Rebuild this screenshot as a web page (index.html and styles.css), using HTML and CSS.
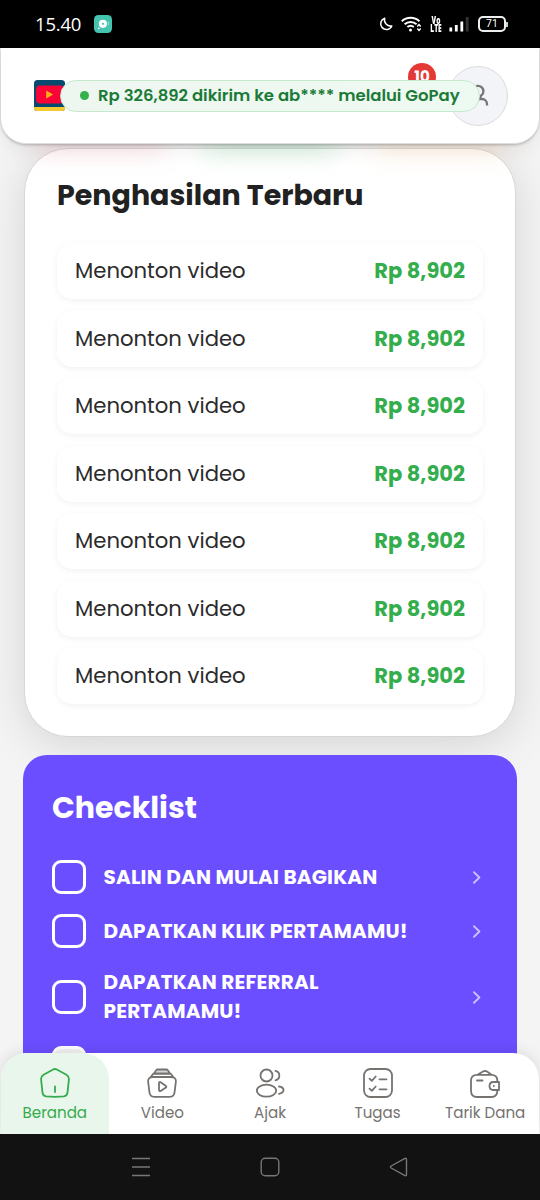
FILE: index.html
```
<!DOCTYPE html>
<html lang="id">
<head>
<meta charset="utf-8">
<title>Beranda</title>
<link rel="stylesheet" href="styles.css">
</head>
<body>
<div class="statusbar">
  <span class="clock">15.40</span>
  <svg class="app-icon" width="18" height="18" viewBox="0 0 18 18"><rect width="18" height="18" rx="4.5" fill="#45c5af"/><circle cx="8.9" cy="8.8" r="4.1" fill="#fff"/><circle cx="9" cy="8.8" r="1.1" fill="#45c5af"/><path d="M4 13.3h1.8" stroke="#fff" stroke-width="1.2"/><path d="M14.3 7v3" stroke="#9be5d6" stroke-width="1"/></svg>
  <div class="status-icons">
    <svg class="moon" width="14" height="14" viewBox="0 0 14 14" fill="none" stroke="#fff" stroke-width="1.5" stroke-linejoin="round"><path d="M5.7 1.2A5.8 5.8 0 1 0 12.8 9 6.2 6.2 0 0 1 5.7 1.2z"/></svg>
    <svg class="wifi" width="22" height="18" viewBox="0 0 22 18" fill="none" stroke="#fff" stroke-width="2"><path d="M.8 6.2a13 13 0 0 1 17.6 0M3.6 9.2a9 9 0 0 1 12 0M6.4 12a5 5 0 0 1 6.4 0"/><circle cx="9.5" cy="14.9" r="1.5" fill="#fff" stroke="none"/><path d="M16.3 11.5l1.7-1.9 1.7 1.9M16.3 13.5l1.7 1.9 1.7-1.9" stroke-width="1.4"/></svg>
    <span class="volte">Vo<br>LTE</span>
    <svg class="signal" width="20" height="16" viewBox="0 0 20 16" stroke-width="2.8"><path d="M1.8 11.5v4M7.3 9v6.5M12.8 5.5v10" stroke="#fff"/><path d="M18.2 1v14.5" stroke="#333"/></svg>
    <span class="battery">71</span>
  </div>
</div>

<div class="app">
  <header class="header">
    <svg class="logo" width="31" height="31" viewBox="0 0 31 31"><rect width="31" height="31" rx="3.5" fill="#064a70"/><path d="M0 27h31v1a3 3 0 0 1-3 3H3a3 3 0 0 1-3-3z" fill="#f5c931"/><rect x="2" y="5.5" width="28" height="18" rx="4" fill="#fa0437"/><path d="M12.2 10.5v8l7-4z" fill="#fbae17"/></svg>
    <div class="avatar"><span class="count">10</span>
      <svg width="26" height="26" viewBox="0 0 26 26" fill="none" stroke="#777" stroke-width="2.3"><circle cx="13" cy="8.2" r="5.4"/><path d="M4 22.5V21a5 5 0 0 1 5-5h8a5 5 0 0 1 5 5v1.500M16 13q-1.500 2-.5 3"/></svg>
    </div>
    <div class="toast"><i class="dot"></i><span class="toast-text">Rp 326,892 dikirim ke ab**** melalui GoPay</span></div>
  </header>
  <div class="glow"><i class="pink"></i><i class="green"></i><i class="orange"></i></div>

  <main class="content">
    <section class="earnings">
      <h2 class="earnings-title">Penghasilan Terbaru</h2>
      <ul class="earning-list">
        <li class="earning"><span class="source">Menonton video</span><b class="amount">Rp 8,902</b></li>
        <li class="earning"><span class="source">Menonton video</span><b class="amount">Rp 8,902</b></li>
        <li class="earning"><span class="source">Menonton video</span><b class="amount">Rp 8,902</b></li>
        <li class="earning"><span class="source">Menonton video</span><b class="amount">Rp 8,902</b></li>
        <li class="earning"><span class="source">Menonton video</span><b class="amount">Rp 8,902</b></li>
        <li class="earning"><span class="source">Menonton video</span><b class="amount">Rp 8,902</b></li>
        <li class="earning"><span class="source">Menonton video</span><b class="amount">Rp 8,902</b></li>
      </ul>
    </section>
    <section class="checklist">
      <h2 class="checklist-title">Checklist</h2>
      <ul class="tasks">
        <li class="task"><i class="box"></i><span class="task-name">SALIN DAN MULAI BAGIKAN</span><svg class="chevron" width="8" height="13" viewBox="0 0 8 13"><path d="M1 1.2l5.4 5.3L1 11.8"/></svg></li>
        <li class="task"><i class="box"></i><span class="task-name">DAPATKAN KLIK PERTAMAMU!</span><svg class="chevron" width="8" height="13" viewBox="0 0 8 13"><path d="M1 1.2l5.4 5.3L1 11.8"/></svg></li>
        <li class="task"><i class="box"></i><span class="task-name">DAPATKAN REFERRAL<br>PERTAMAMU!</span><svg class="chevron" width="8" height="13" viewBox="0 0 8 13"><path d="M1 1.2l5.4 5.3L1 11.8"/></svg></li>
        <li class="task"><i class="box done"></i></li>
      </ul>
    </section>
  </main>

  <nav class="tabs">
    <a class="tab active"><svg width="30" height="30" viewBox="1 1 30 30"><path d="M14.2 2.5q1.8-1 3.6 0l9.6 5.3q2.8 1.6 2.5 4.7l-1.4 13.2q-.3 3.2-3.6 3.7-8.9.8-17.8 0-3.3-.5-3.6-3.7L2.1 12.5q-.3-3.1 2.5-4.7zM16 19.5v5.5"/></svg><span>Beranda</span></a>
    <a class="tab"><svg width="30" height="30" viewBox="1 1 30 30"><path d="M8 6.7l2-3.3q.5-.9 2-.9h8q1.5 0 2 .9l2 3.3z" fill="#d5d4d3"/><path d="M7 10q-5 0-4.9 4.5l1.3 10.5q.4 4.800 4.800 4.800h15.600q4.400 0 4.800-4.800l1.300-10.500Q30 10 25 10zM4.800 10l2.400-3.300h17.600l2.400 3.300M13 16v7q.1 1.700 1.600.9l5-3.200q1.500-1 0-2l-5-3.500q-1.500-.8-1.600.8z"/></svg><span>Video</span></a>
    <a class="tab"><svg width="30" height="30" viewBox="1 1 30 30"><circle cx="12.500" cy="8.500" r="6"/><ellipse cx="12.500" cy="23.700" rx="9.700" ry="6"/><path d="M21.500 3.900a4.800 4.800 0 0 1 0 9.400M25 19.500q4.500.6 4.500 3.600t-4.500 3.700"/></svg><span>Ajak</span></a>
    <a class="tab"><svg width="30" height="30" viewBox="1 1 30 30"><rect x="2" y="2" width="28" height="28" rx="6.500"/><path d="M7.500 11.700l2.300 2.100 3.900-4.300M17.500 12.300h7M7.500 21.700l2.300 2.100 3.900-4.300M17.500 22.300h7"/></svg><span>Tugas</span></a>
    <a class="tab"><svg width="30" height="30" viewBox="1 1 30 30"><path d="M28.300 15v-1.500q0-5.700-6-5.700H8q-6 0-6 6v9.700q0 6.500 6 6.500h14.300q6 0 6-6.200V23M8.500 7.800l5.500-3.300q2-1 4 0l4.500 3.300M8 13.500h5.500M30 15h-5.500q-4 0-4 4t4 4H30zM24.800 19h.1"/></svg><span>Tarik Dana</span></a>
  </nav>
</div>

<div class="systembar">
  <svg width="20" height="20" viewBox="0 0 20 20"><path d="M1 1.500h18M1 10h18M1 18.500h18"/></svg>
  <svg width="20" height="20" viewBox="0 0 20 20"><rect x="1.200" y="1.200" width="17.600" height="17.600" rx="4"/></svg>
  <svg width="20" height="20" viewBox="0 0 20 20"><path d="M2.200 9q-1.500 1 0 2l13.300 7.400q2 1 2-1V2.600q0-2-2-1z"/></svg>
</div>
</body>
</html>
```

FILE: styles.css
```
* { box-sizing: border-box; }
body {
  margin: 0;
  width: 540px;
  height: 1200px;
  overflow: hidden;
  background: #121212;
  font-family: Poppins, Inter, "Open Sans", sans-serif;
}
h2, ul { margin: 0; padding: 0; }
ul { list-style: none; }

.statusbar {
  height: 48px;
  padding: 0 34px 0 35px;
  display: flex;
  align-items: center;
  background: #000;
  color: #fff;
}
.clock { width: 59px; font: 18.5px/48px "Open Sans", sans-serif; letter-spacing: -.2px; white-space: nowrap; }
.status-icons { margin-left: auto; display: flex; align-items: center; }
.moon { margin: 0 8px 0 -2px; }
.wifi { margin-right: 4px; }
.volte {
  width: 18px;
  margin-right: 4px;
  font: 800 10px/8px "Open Sans", sans-serif;
  text-align: center;
  transform: scaleX(.66);
}
.signal { margin-right: 9px; }
.battery {
  position: relative;
  width: 28px;
  height: 16px;
  border: 2px solid #eee;
  border-radius: 5px;
  font: 10.5px/12px Roboto, sans-serif;
  text-align: center;
}
.battery::after {
  content: "";
  position: absolute;
  right: -4px;
  top: 3.5px;
  width: 2px;
  height: 5px;
  background: #ccc;
}

.app { position: relative; height: 1086px; overflow: hidden; background: #f4f4f4; }
.header {
  position: relative;
  z-index: 3;
  height: 96px;
  margin: 0 1px;
  padding: 0 31px 0 33px;
  display: flex;
  align-items: center;
  justify-content: space-between;
  background: #fff;
  border-bottom: 1px solid #ddd;
  border-radius: 0 0 25px 25px;
  box-shadow: 0 1px 3px rgba(0,0,0,.25), 0 6px 20px rgba(0,0,0,.06);
}
.avatar {
  position: relative;
  width: 60px;
  height: 60px;
  display: grid;
  place-items: center;
  background: #f3f4f8;
  border: 1px solid #dcdcdf;
  border-radius: 50%;
}
.count {
  position: absolute;
  left: -41px;
  top: -4px;
  width: 28px;
  height: 28px;
  border-radius: 50%;
  background: #e53935;
  color: #fff;
  font-weight: 700;
  font-size: 15px;
  line-height: 28px;
  text-align: center;
}
.toast {
  position: absolute;
  left: 59px;
  top: 32px;
  width: 420px;
  height: 32px;
  padding: 0 0 1px 19px;
  display: flex;
  align-items: center;
  gap: 9px;
  background: linear-gradient(90deg, #eef6f0, #edfaf1);
  border: 1px solid #c6e8cf;
  border-radius: 16px;
}
.dot { width: 9px; height: 9px; border-radius: 50%; background: #34b04c; }
.toast-text { color: #1c7a38; font-size: 16.5px; line-height: 28px; font-weight: 600; letter-spacing: -.02px; white-space: nowrap; }
.glow {
  position: absolute;
  z-index: 2;
  left: 0;
  top: 85px;
  width: 540px;
  height: 14px;
  padding: 0 36px;
  display: flex;
  justify-content: space-between;
  filter: blur(14px);
}
.pink { width: 128px; background: rgba(240,90,110,.28); }
.green { width: 132px; background: rgba(50,175,90,.36); }
.orange { width: 128px; background: rgba(250,165,80,.34); }

.content { padding: 4px 23px 0; }
.earnings {
  height: 589px;
  margin: 0 1.5px 0 1px;
  padding: 26px 32px 27px;
  background: #fff;
  border: 1px solid #d7d7d7;
  border-radius: 44px;
  box-shadow: 0 8px 45px rgba(0,0,0,.13);
}
.earnings-title { height: 68px; color: #212121; font-size: 28.5px; line-height: 40px; white-space: nowrap; }
.earning-list { display: grid; gap: 11.5px; }
.earning {
  height: 56px;
  padding: 0 17.500px 1px 18px;
  display: flex;
  align-items: center;
  justify-content: space-between;
  border-radius: 15px;
  background: #fff;
  box-shadow: 0 2px 6px rgba(0,0,0,.055);
}
.source { color: #2b2b2b; font-size: 21.2px; }
.amount { color: #34ad4c; font-size: 21px; }

.checklist {
  position: relative;
  height: 400px;
  margin-top: 18px;
  padding: 32px 36px 0 29px;
  background: #6b4eff;
  border-radius: 24px;
  color: #fff;
}
.checklist-title { height: 73px; font-size: 30px; line-height: 41px; }
.tasks { display: grid; gap: 20px; }
.task { display: flex; align-items: center; min-height: 34px; }
.box { width: 34px; height: 34px; margin-right: 17.5px; border: 3px solid #fff; border-radius: 9px; }
.done { background: #f3f3f3; }
.task-name { padding-bottom: 1px; margin-bottom: -1px; font-size: 20px; line-height: 29px; letter-spacing: .17px; font-weight: 700; white-space: nowrap; transform: translateY(-.5px); }
.chevron { margin-left: auto; fill: none; stroke: #c9bfff; stroke-width: 1.9; stroke-linecap: round; stroke-linejoin: round; }

.tabs {
  position: absolute;
  z-index: 3;
  left: 1px;
  bottom: 0;
  width: 538px;
  height: 81px;
  display: grid;
  grid-template-columns: repeat(5, 1fr);
  background: #fff;
  border-radius: 26px 26px 0 0;
  box-shadow: 0 -2px 14px rgba(0,0,0,.1);
  overflow: hidden;
}
.tab {
  padding-top: 15px;
  display: flex;
  flex-direction: column;
  align-items: center;
  gap: 5px;
  color: #75726f;
  font-size: 15.1px;
  line-height: 20px;
  white-space: nowrap;
}
.tab svg { fill: none; stroke: currentColor; stroke-width: 1.8; stroke-linecap: round; stroke-linejoin: round; }
.active { background: #e9f6ec; color: #34ab4d; border-radius: 26px 26px 0 0; }
.systembar {
  height: 66px;
  padding: 0 131px;
  display: flex;
  align-items: center;
  justify-content: space-between;
  background: #121212;
}
.systembar svg { fill: none; stroke: #777; stroke-width: 1.4; }
```
